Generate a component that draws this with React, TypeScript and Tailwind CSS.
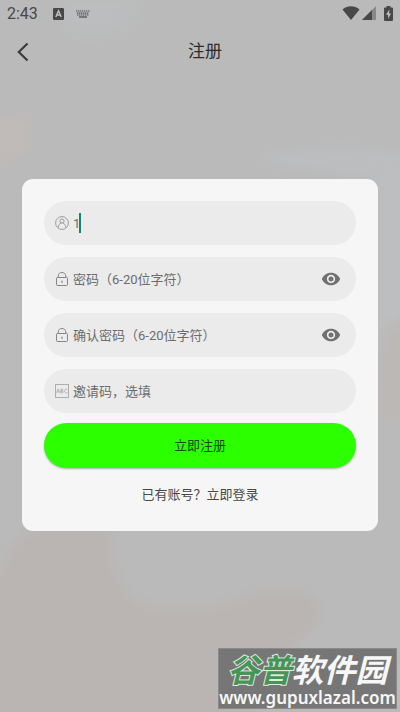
import { useState } from "react";
import { MdRemoveRedEye } from "react-icons/md";

interface FieldProps {
  icon: React.ReactNode;
  label: string;
  type?: string;
  defaultValue?: string;
  showCaret?: boolean;
}

const UserIcon = () => (
  <svg viewBox="0 0 14 14" className="w-3.5 h-3.5" fill="none" stroke="#929292" strokeWidth="0.9">
    <circle cx="7" cy="7" r="6.4" />
    <circle cx="7" cy="5.1" r="2.1" />
    <path d="M3.300 11c.2-2.300 1.300-3.500 2.700-4M10.700 11c-.2-2.300-1.300-3.500-2.700-4" strokeLinecap="round" />
  </svg>
);

const LockIcon = () => (
  <svg viewBox="0 0 14 14" className="w-3.5 h-3.5" fill="none" stroke="#858585" strokeWidth="1">
    <rect x="1.5" y="5.5" width="11" height="8" rx="0.8" />
    <path d="M3.2 5.5V4C3.2 1.9 4.8.5 7 .5s3.8 1.4 3.8 3.5v1.5" />
    <path d="M7 8.7v2" strokeWidth="1.3" />
  </svg>
);

const CodeIcon = () => (
  <svg viewBox="0 0 14 14" className="w-3.5 h-3.5" fill="none" stroke="#a3a3a3" strokeWidth="0.7">
    <rect x="0.5" y="0.5" width="13" height="13" stroke="#adadad" strokeWidth="1" />
    <path d="M1.400 9.200 3.100 5l1.700 4.200M2 7.800h2.200" />
    <path d="M5.900 5v4h1.300c1.500 0 1.500-2 0-2H5.900h1.100c1.300 0 1.300-2 0-2z" />
    <path d="M12.600 5.800c-.5-.8-1.200-1-1.800-.8-1.600.5-1.600 3.500 0 4 .7.2 1.400-.1 1.800-.8" />
  </svg>
);

const Field = ({ icon, label, type = "text", defaultValue, showCaret = false }: FieldProps) => {
  const [visible, setVisible] = useState(false);
  const isPassword = type === "password";

  return (
    <div className="flex items-center h-11 pl-[11px] pr-[15px] rounded-full bg-[#ebebeb]">
      {icon}
      <div className="relative flex-1 min-w-0 ml-1">
        <input
          type={isPassword && visible ? "text" : type}
          aria-label={label}
          placeholder={label}
          defaultValue={defaultValue}
          className="block w-full h-5 bg-transparent text-[13px] text-[#6d6d6d] placeholder:text-[#6d6d6d] caret-[#0f8577] outline-none"
        />
        {showCaret && <span className="absolute left-1.5 top-0 w-0.5 h-5 bg-[#0f8577]" />}
      </div>
      {isPassword && (
        <button
          type="button"
          aria-label="显示密码"
          onClick={() => setVisible(!visible)}
          className="shrink-0"
        >
          <MdRemoveRedEye className="w-5 h-5 text-[#707070]" />
        </button>
      )}
    </div>
  );
};

const StatusBar = () => (
  <div className="flex items-center justify-between h-7 px-[7px] text-[#484848]">
    <div className="flex items-center">
      <span className="text-[16px] leading-7">2:43</span>
      <svg viewBox="0 0 11 12" className="w-[11px] h-3 ml-[15px]">
        <rect width="11" height="12" rx="1.2" fill="#484848" />
        <path d="M2.800 9 5.500 2.800 8.200 9M3.800 7h3.400" fill="none" stroke="#c2c2c2" strokeWidth="1.4" />
      </svg>
      <svg viewBox="0 0 14 8" className="w-3.5 h-2 ml-3" fill="none" stroke="#505050">
        <path d="M0 1h14M1 3.200h12M1 5h12" strokeWidth="1.2" strokeDasharray="1.4 .6" />
        <path d="M3 7h8" strokeWidth="1.3" />
      </svg>
    </div>
    <div className="flex items-center h-[26px] self-start">
      <svg viewBox="0 0 18 14" className="w-[18px] h-3.5" fill="currentColor">
        <path d="M.5 3.400C5.500-.8 12.500-.8 17.500 3.400L9 14z" />
      </svg>
      <svg viewBox="0 0 14 14" className="w-3.5 h-3.5 ml-0.5">
        <path d="M0 14 14 0v14z" fill="#888888" />
        <path d="M0 14 10 4v10z" fill="currentColor" />
      </svg>
      <svg viewBox="0 0 9 15" className="w-[9px] h-[15px] ml-2">
        <path d="M2.500 0h4v1.500H8q1 0 1 1V14q0 1-1 1H1q-1 0-1-1V2.500q0-1 1-1h1.500z" fill="currentColor" />
        <path d="M5.500 3.500 2 8.700h2.100v4L7 7.500H5z" fill="#c2c2c2" />
      </svg>
    </div>
  </div>
);

const Background = () => (
  <svg
    viewBox="0 0 400 712"
    preserveAspectRatio="none"
    className="absolute inset-0 w-full h-full"
    aria-hidden="true"
  >
    <defs>
      <filter id="soft" x="-30%" y="-30%" width="160%" height="160%">
        <feGaussianBlur stdDeviation="6" />
      </filter>
    </defs>
    <g filter="url(#soft)">
      <path d="M60 0h80q-10 38-50 38-30 0-30-38z" fill="#bbbdbe" />
      <path d="M-20 116h50v34q-15 10-50 14z" fill="#c0bab8" />
      <path d="M255 160q75-22 165-2v190h-45V178z" fill="#bcbec0" />
      <path d="M385 330l30-20v100l-40 10z" fill="#bcb8b6" />
      <path d="M-20 600 5 560q10-25 40-40h65q0 70 35 85 70 10 110-14h45q25 8 20 30l-30 30-40 80H-20z" fill="#bab5b3" />
    </g>
  </svg>
);

const Watermark = () => (
  <div className="absolute right-[3px] bottom-[3px] flex flex-col items-center w-[179px] h-[61px] pt-[3px] bg-[#767676] border border-[#8a8a8a] text-[#f7f7f7] whitespace-nowrap">
    <div className="flex text-[32px] leading-8 font-bold italic font-['Noto_Sans_CJK_SC',sans-serif]">
      <div className="text-[#469557] [-webkit-text-stroke:2px_#dfeae1] [paint-order:stroke_fill]">
        谷普
      </div>
      <div>软件园</div>
    </div>
    <div className="mt-1 text-[17px] leading-5 font-semibold font-['Noto_Sans',sans-serif]">
      www.gupuxlazal.com
    </div>
  </div>
);

const App = () => {
  return (
    <div className="relative flex flex-col min-h-screen overflow-hidden bg-[#bababa] font-['Roboto','Noto_Sans_CJK_SC',sans-serif]">
      <Background />

      <div className="relative">
        <StatusBar />
        <header className="flex items-center h-12">
          <button
            type="button"
            aria-label="返回"
            className="flex items-center justify-center w-[46px] h-12"
          >
            <svg viewBox="0 0 12 20" className="w-3 h-5" fill="none" stroke="#3c3c3c" strokeWidth="2.2">
              <path d="M10.500 1.500 1.800 10l8.700 8.500" />
            </svg>
          </button>
          <h1 className="flex-1 text-center text-[17px] text-[#2c2c2c]">注册</h1>
          <div className="w-9" />
        </header>
      </div>

      <main className="relative px-[22px] pt-[103px]">
        <form
          onSubmit={(e) => e.preventDefault()}
          className="flex flex-col px-[22px] pt-[22px] pb-[26px] rounded-[11px] bg-[#f6f6f6]"
        >
          <div className="flex flex-col gap-3">
            <Field icon={<UserIcon />} label="账号" defaultValue="1" showCaret />
            <Field icon={<LockIcon />} label="密码（6-20位字符）" type="password" />
            <Field icon={<LockIcon />} label="确认密码（6-20位字符）" type="password" />
            <Field icon={<CodeIcon />} label="邀请码，选填" />
          </div>
          <button
            type="submit"
            className="h-[45px] mt-2.5 rounded-full bg-[#2bff00] text-[13px] text-[#164a0d] shadow-[0_1px_2px_rgba(0,0,0,0.3)]"
          >
            立即注册
          </button>
          <a href="#login" className="self-center mt-[17px] text-[13px] leading-5 text-[#484848]">
            已有账号？立即登录
          </a>
        </form>
      </main>

      <Watermark />
    </div>
  );
};

export default App;
